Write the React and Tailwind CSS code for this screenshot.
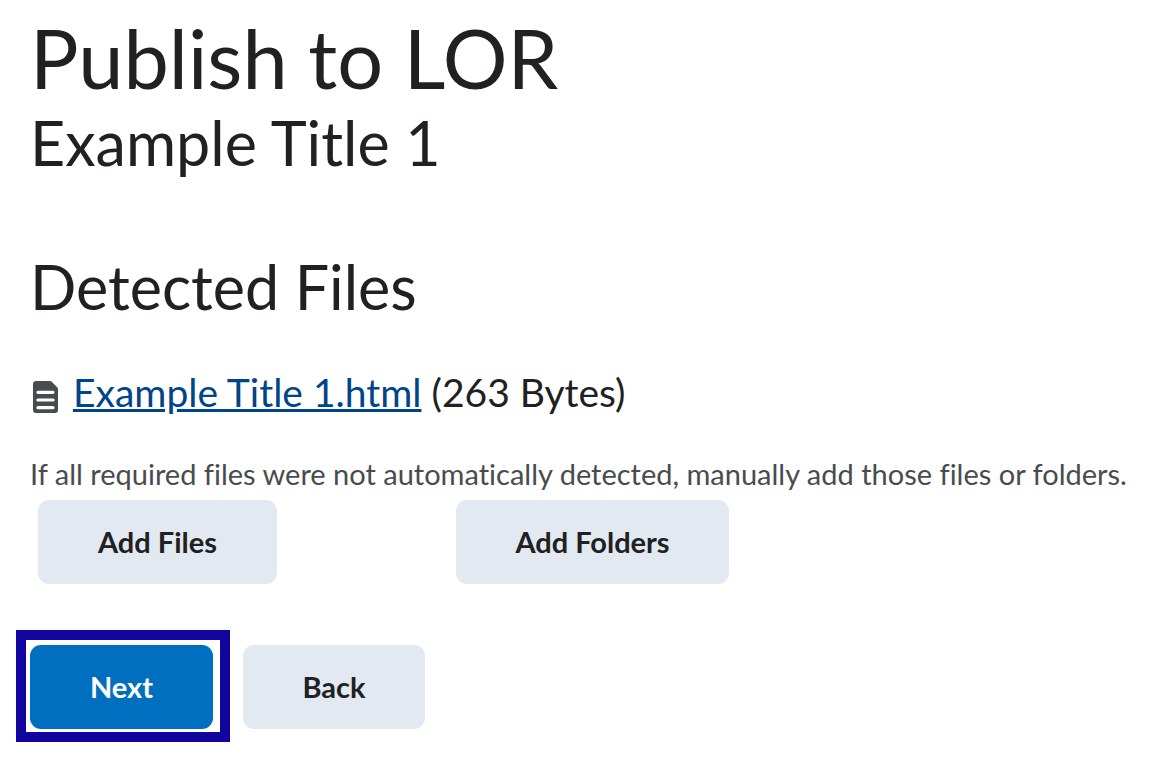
import React from 'react';

export default function App() {
  return (
    <div className="w-[1174px] h-[764px] bg-white overflow-hidden font-['Lato','Open_Sans',sans-serif] text-[#202122] [font-variant-ligatures:none]">
      <div className="pl-[30px] pt-[13px]">
        <h1 className="text-[81px] leading-[90px] font-normal">Publish to LOR</h1>
        <h2 className="mt-[4px] text-[61px] leading-[72px] font-normal">Example Title 1</h2>
        <h2 className="mt-[69px] text-[61px] leading-[78px] font-normal">Detected Files</h2>
        <div className="mt-[42px] flex items-center h-[48px] text-[39px]">
          <svg className="ml-[3px] w-[25px] h-[32px] mt-[9px] shrink-0" viewBox="0 0 25 32">
            <path d="M3 0h14a2 2 0 0 1 1.500.6l5.900 6a2 2 0 0 1 .6 1.400v21a3 3 0 0 1-3 3H3a3 3 0 0 1-3-3V3a3 3 0 0 1 3-3z" fill="#494c4e" />
            <path d="M5 11.300h15M5 19h15M5 26.700h15" stroke="#fff" strokeWidth="3.200" strokeLinecap="round" />
          </svg>
          <a href="#" className="ml-[15px] text-[#004489] underline">Example Title 1.html</a>
          <span className="ml-[10px]">(263 Bytes)</span>
        </div>
      </div>
      <p className="mt-[38px] pl-[30px] text-[29px] leading-[40px] text-[#494c4e] whitespace-nowrap">If all required files were not automatically detected, manually add those files or folders.</p>
      <div className="flex pl-[38px] mt-[6px] gap-[179px]">
        <button className="w-[239px] h-[84px] rounded-[11px] bg-[#e3e9f1] text-[29px] font-bold">Add Files</button>
        <button className="w-[273px] h-[84px] rounded-[11px] bg-[#e3e9f1] text-[29px] font-bold">Add Folders</button>
      </div>
      <div className="flex items-end ml-[16px] mt-[46px]">
        <div className="border-[10px] border-[#10069f] pl-[4px] pr-[7px] pt-[5px] pb-[3px]">
          <button className="block w-[183px] h-[84px] rounded-[11px] bg-[#006fbf] text-white text-[29px] font-bold">Next</button>
        </div>
        <button className="ml-[13px] mb-[13px] w-[182px] h-[84px] rounded-[11px] bg-[#e3e9f1] text-[29px] font-bold">Back</button>
      </div>
    </div>
  );
}
